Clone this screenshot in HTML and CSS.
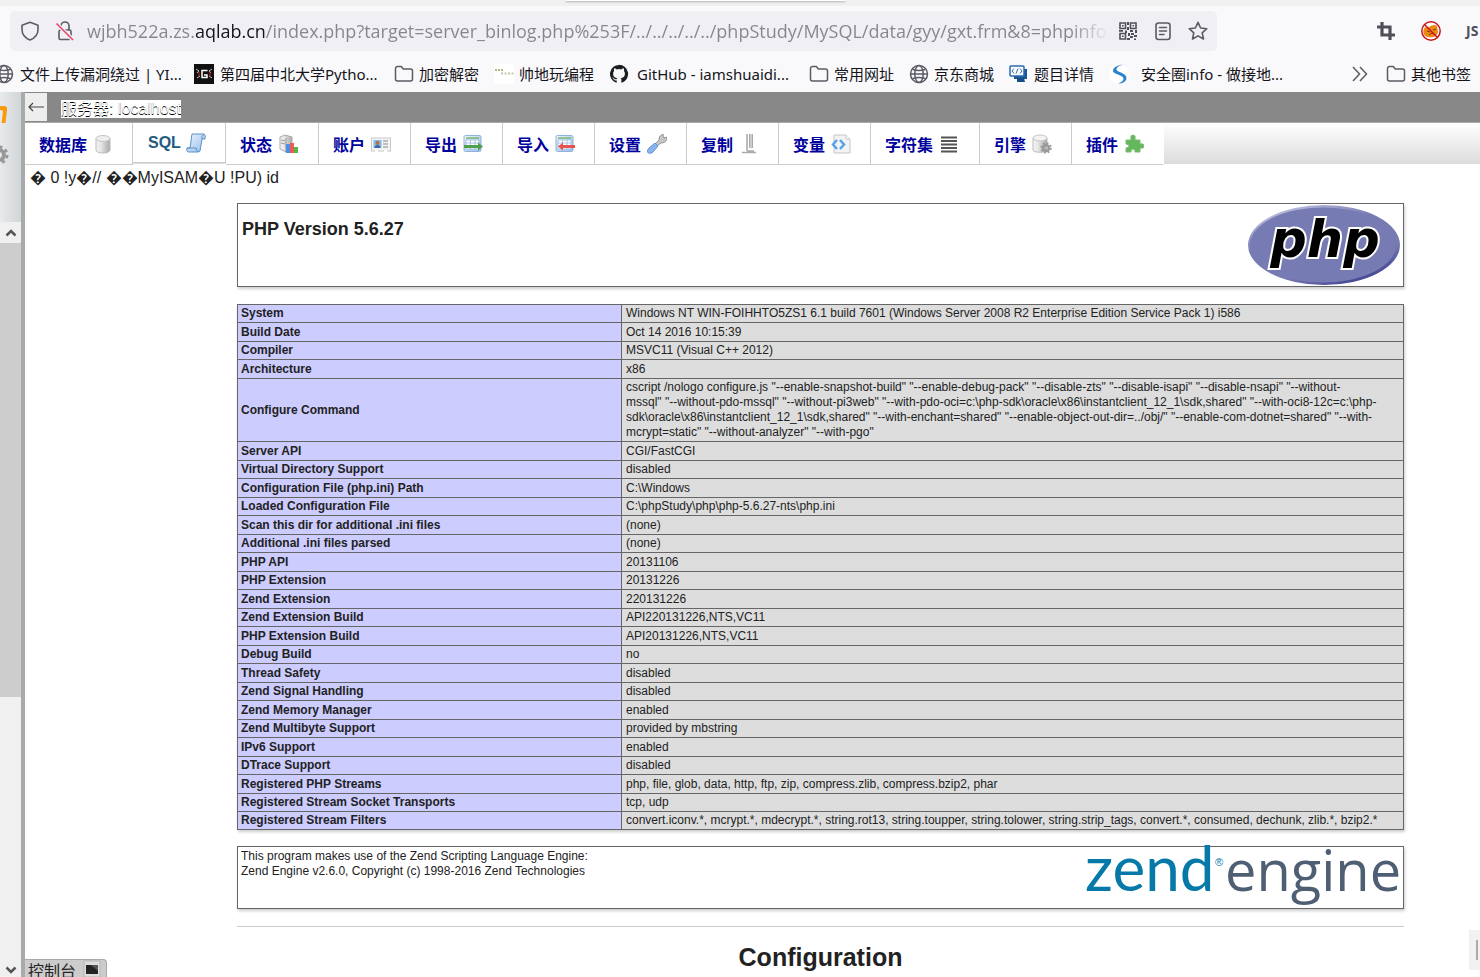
FILE: index.html
```html
<!DOCTYPE html>
<html lang="zh-CN">
<head>
<meta charset="utf-8">
<title>phpinfo()</title>
<link rel="stylesheet" href="styles.css">
</head>
<body>
<svg class="defs" aria-hidden="true">
  <defs>
    <linearGradient id="metal" x1="0" x2="1" y1="0" y2="0"><stop offset="0" stop-color="#f4f4f4"/><stop offset=".35" stop-color="#e6e6e6"/><stop offset="1" stop-color="#a9a9a9"/></linearGradient>
    <linearGradient id="blue" x1="0" x2="1" y1="0" y2="1"><stop offset="0" stop-color="#eef6ff"/><stop offset="1" stop-color="#93bdea"/></linearGradient>
    <symbol id="folder" viewBox="0 0 20 20"><path d="M1.5 15V4.500a2 2 0 0 1 2-2h3.800l2 2.500H16.500a2 2 0 0 1 2 2V15a2 2 0 0 1-2 2h-13a2 2 0 0 1-2-2Z" fill="none" stroke="#5b5b66" stroke-width="1.500"/></symbol>
    <symbol id="globe" viewBox="0 0 20 20"><g fill="none" stroke="#5b5b66" stroke-width="1.500"><circle cx="10" cy="10" r="8.500"/><ellipse cx="10" cy="10" rx="4.200" ry="8.500"/><path d="M1.500 10h17M3.500 5.200c4 1.600 9 1.600 13 0M3.500 14.800c4-1.600 9-1.600 13 0"/></g></symbol>
    <symbol id="gear" viewBox="0 0 20 20"><g fill="none" stroke="#999"><circle cx="10" cy="10" r="5" stroke-width="4"/><circle cx="10" cy="10" r="8" stroke-width="3" stroke-dasharray="3.140 3.140"/></g></symbol>
    <symbol id="sheet" viewBox="0 0 20 20"><rect x="1" y="1.500" width="17" height="16" rx="1.500" fill="url(#blue)" stroke="#8fb3dc"/><path d="M3 4h13" stroke="#78b66c" stroke-width="1.500"/><rect x="3" y="6" width="13" height="9" fill="#fff" stroke="#a8c4e2"/><path d="M3 9h13M3 12h13M7.500 6v9M12 6v9" stroke="#a8c4e2"/></symbol>
  </defs>
</svg>

<div class="strip"><div class="strip-popup"></div></div>
<div class="navbar">
  <div class="urlbar">
    <svg class="ico" viewBox="0 0 20 20"><path d="M10 1.200 18 4.200v4.300c0 4.800-3.300 8.600-8 10.500C5.300 17.100 2 13.300 2 8.500V4.200Z" fill="none" stroke="#5b5b66" stroke-width="1.600" stroke-linejoin="round"/></svg>
    <svg class="ico" viewBox="0 0 20 20"><g fill="none" stroke="#5b5b66" stroke-width="1.600"><rect x="4" y="9" width="12" height="9.500" rx="1.500"/><path d="M6 9V5a4 4 0 0 1 8 0v4"/></g><path d="M1.500 2.500 18 19" stroke="#f0f0f4" stroke-width="4"/><path d="M1.500 2.500 18 19" stroke="#e8416a" stroke-width="1.600"/></svg>
    <input class="url" type="text" aria-label="地址" value="wjbh522a.zs.aqlab.cn/index.php?target=server_binlog.php%253F/../../../../../phpStudy/MySQL/data/gyy/gxt.frm&amp;8=phpinfo()">
    <svg class="ico" viewBox="0 0 20 20"><g fill="none" stroke="#4f4f59" stroke-width="1.600"><path d="M2 2h5.500v5.500H2zM12.500 2H18v5.500h-5.500zM2 12.500h5.500V18H2z"/></g><path d="M4 4h1.600v1.600H4zM14.500 4h1.600v1.600h-1.600zM4 14.500h1.600v1.600H4zM9 1h2v3H9zM9 6h2v3H9zM1 9h4v1.800H1zM7 9.500h2V12H7zM12 9h3v2h-3zM17 9h2v3h-2zM10 12h2v3h-2zM13 12h3v2h-3zM12 15h3v2h-3zM16 14h3v2h-3zM9 17h3v2H9zM16 17.500h2V19h-2z" fill="#4f4f59"/></svg>
    <svg class="ico" viewBox="0 0 20 20"><g fill="none" stroke="#5b5b66" stroke-width="1.600" stroke-linecap="round"><rect x="3" y="2" width="14" height="16.500" rx="2.500"/><path d="M6.500 6.500h7M6.500 10h7M6.500 13.500h4.500"/></g></svg>
    <svg class="ico" viewBox="0 0 20 20"><path d="m10 1.300 2.600 5.700 6.200.7-4.600 4.200 1.300 6.100L10 14.900 4.500 18l1.300-6.100L1.200 7.700 7.400 7Z" fill="none" stroke="#5b5b66" stroke-width="1.600" stroke-linejoin="round"/></svg>
  </div>
  <div class="extensions">
    <svg class="ico" viewBox="0 0 20 20"><path d="M6 1v13h13M1 6h13v13" fill="none" stroke="#4f4f59" stroke-width="3.200"/></svg>
    <svg class="ico" viewBox="0 0 20 20"><path d="M3 8c1-3 3-1 5-2 3-2 6-3 8-1l1 6c-1 5-6 6-10 5-3 0-6-4-4-8Z" fill="#ee8612"/><path d="m6 10 3 1m3-2 3-1M8 14c2-2 4-2 5-1" stroke="#713d10" fill="none"/><circle cx="10" cy="10" r="9.200" fill="none" stroke="#c9171e" stroke-width="1.500"/><path d="m3.500 3.500 13 13" stroke="#c9171e" stroke-width="1.500"/></svg>
    <span class="js">JS</span>
  </div>
</div>

<nav class="bookmarks">
  <a class="bookmark wide" href="#"><svg class="ico"><use href="#globe"/></svg>文件上传漏洞绕过 | YI...</a>
  <a class="bookmark wide" href="#"><svg class="ico" viewBox="0 0 20 20"><path d="M0 0h20v20H0z" fill="#111"/><path d="M13.500 6.500H8v7h5V11h-3" fill="none" stroke="#fff" stroke-width="1.500"/><path d="m2 5 3 2-2 2m0 5 3-2m12-7-3 2 2 2m1 5-3-2" fill="none" stroke="#d5bcae"/><path d="M5 8v4M16 8v4" stroke="#c22"/></svg>第四届中北大学Pytho...</a>
  <a class="bookmark" href="#"><svg class="ico"><use href="#folder"/></svg>加密解密</a>
  <a class="bookmark mid" href="#"><svg class="ico" viewBox="0 0 20 20"><path d="M0 0h20v20H0z" fill="#fff"/><path d="M1 6h9" stroke="#b5b584" stroke-width="2" stroke-dasharray="2 1"/><path d="M7 9.500h13" stroke="#c8c8a8" stroke-width="2" stroke-dasharray="2 1.500"/></svg>帅地玩编程</a>
  <a class="bookmark wide roomy" href="#"><svg class="ico" viewBox="0 0 16 16"><path fill="#1b1f24" d="M8 .700a7.300 7.300 0 0 0-2.300 14.200c.4.100.5-.2.500-.4v-1.400c-2 .4-2.500-.9-2.500-.9-.3-.8-.8-1.100-.8-1.100-.7-.4 0-.4 0-.4.700 0 1.100.8 1.100.8.700 1.100 1.700.8 2.200.6 0-.5.200-.8.400-1-1.600-.2-3.300-.8-3.300-3.600 0-.8.300-1.500.8-2-.1-.2-.4-1 .1-2 0 0 .6-.2 2 .8a7 7 0 0 1 3.600 0c1.400-1 2-.8 2-.8.500 1 .2 1.800.1 2 .5.500.8 1.200.8 2 0 2.800-1.700 3.400-3.300 3.600.3.200.5.700.5 1.400v2c0 .2.100.5.500.4A7.300 7.300 0 0 0 8 .700Z"/></svg>GitHub - iamshuaidi...</a>
  <a class="bookmark" href="#"><svg class="ico"><use href="#folder"/></svg>常用网址</a>
  <a class="bookmark" href="#"><svg class="ico"><use href="#globe"/></svg>京东商城</a>
  <a class="bookmark" href="#"><svg class="ico" viewBox="0 0 20 20"><path d="M5 5h13v10H5z" fill="#1b5798"/><path d="M8 14h7l1 4H8z" fill="#164c88"/><rect x="1" y="2" width="14" height="10" rx="1" fill="#fff" stroke="#2c69ac" stroke-width="1.500"/><path d="m5 4.500-2 2.500 2 2.500m6-5 2 2.500-2 2.500m-2-5-2 5" fill="none" stroke="#2c69ac"/></svg>题目详情</a>
  <a class="bookmark wide roomier" href="#"><svg class="ico" viewBox="0 0 20 20"><circle cx="10" cy="10" r="10" fill="#fff"/><path d="M15 .500C8 1 3.500 4 4 7c.5 3.500 11 4 10.500 8-.2 2-3 3.500-5.500 4.500 5 0 8.500-2 8.500-5.500C17.500 8.500 7.500 8.500 7.500 5.500 7.500 3 11 1 15 .500Z" fill="#2d83cd"/></svg>安全圈info - 做接地...</a>
  <div class="bookmarks-end">
    <button class="chevrons" aria-label="更多书签"><svg class="ico" viewBox="0 0 20 20"><path d="m3 3 6.500 7L3 17m7-14 6.500 7-6.500 7" fill="none" stroke="#5b5b66" stroke-width="1.500"/></svg></button>
    <a class="bookmark" href="#"><svg class="ico"><use href="#folder"/></svg>其他书签</a>
  </div>
</nav>

<div class="frames">
  <aside class="sidebar">
    <div class="sidebar-head">
      <svg class="sail" viewBox="0 0 10 20"><path d="M0 2h4q3.500 0 3 4L5.500 19H1.500L3 7.500Q3 6 0 6Z" fill="#f89c0e"/></svg>
      <svg class="side-gear" viewBox="0 0 10 20"><use href="#gear" x="-11" width="20" height="20"/></svg>
    </div>
    <button class="scroll-btn" aria-label="向上"><svg viewBox="0 0 12 8"><path d="m1.500 6.500 4.500-4.500 4.500 4.500" fill="none" stroke="#555" stroke-width="2.500"/></svg></button>
    <div class="thumb"></div>
    <div class="track"></div>
    <button class="scroll-btn down" aria-label="向下"><svg viewBox="0 0 12 8"><path d="m1.500 1.500 4.500 4.500 4.500-4.500" fill="none" stroke="#555" stroke-width="2.500"/></svg></button>
  </aside>

  <main class="main">
    <div class="server">
      <button class="back" aria-label="返回"><svg viewBox="0 0 18 12"><path d="M17 6H2m4-4L2 6l4 4" fill="none" stroke="#444" stroke-width="1.200"/></svg></button>
      <a class="server-link" href="#">服务器: localhost</a>
    </div>
    <nav class="tabs">
      <a class="tab first" href="#">数据库<svg class="ico" viewBox="0 0 20 20"><path d="M3 4v12c0 4 14 4 14 0V4" fill="url(#metal)" stroke="#bbb"/><ellipse cx="10" cy="4.500" rx="7" ry="3" fill="#eee" stroke="#c5c5c5"/></svg></a>
      <a class="tab active" href="#">SQL<svg class="ico" viewBox="0 0 20 20"><path d="M6 1h12q2 1 1 5h-3l-2 12q-1 1-3 1H2q-2-1-1-4h3Z" fill="url(#blue)" stroke="#5d91ca"/><path d="M16 6q-1-3 2-5M1 15h9q0 3 3 4" fill="none" stroke="#5d91ca"/></svg></a>
      <a class="tab status" href="#">状态<svg class="ico" viewBox="0 0 20 20"><path d="m2 3 5-2 7 2v13l-6 2-6-3Z" fill="url(#metal)" stroke="#aaa"/><path d="M8 4v14m-5-12 4 1m-4 2 4 1" stroke="#999"/><path d="M8 10h4v9H8z" fill="#4a8ee8"/><path d="M12 9h4v10h-4z" fill="#ee5c51"/><path d="M16 13h4v6h-4z" fill="#58b64c"/></svg></a>
      <a class="tab" href="#">账户<svg class="ico" viewBox="0 0 20 20"><rect x=".5" y="4" width="19" height="13" fill="#f4f4f4" stroke="#c9c9c9"/><path d="M2.500 6h8v8h-8z" fill="#86b8ec"/><circle cx="6.500" cy="9" r="2" fill="#b0713f"/><path d="M3.500 14q0-3 3-3t3 3Z" fill="#366caa"/><path d="M12 7h5m-5 3h5m-5 3h5" stroke="#aaa" stroke-width="1.500"/><path d="M4 17h3m6 0h3" stroke="#fff" stroke-width="2"/></svg></a>
      <a class="tab" href="#">导出<svg class="ico" viewBox="0 0 20 20"><use href="#sheet"/><path d="M1 11h14V8.500l5 4-5 4V14H1Z" fill="#4f9f4c"/></svg></a>
      <a class="tab" href="#">导入<svg class="ico" viewBox="0 0 20 20"><use href="#sheet"/><path d="M20 11H8V8.500l-5 4 5 4V14h12Z" fill="#e9534f"/></svg></a>
      <a class="tab" href="#">设置<svg class="ico" viewBox="0 0 20 20"><path d="m8 10 4-4q-1-4 4-6l1 4 3-1q0 6-6 6l-4 3Z" fill="#c5c5c5" stroke="#888" stroke-width=".8"/><path d="m2 14 6-5 3 3-5 6q-2 2-4.500 1T2 14Z" fill="#8cb5ec" stroke="#5f93d4"/></svg></a>
      <a class="tab" href="#">复制<svg class="ico" viewBox="0 0 20 20"><path d="M7 0h2v17H7z" fill="#bbb"/><path d="M10 0h4v14h-4z" fill="#aaa"/><path d="M12 0v15" stroke="#eee"/><path d="M3 18.500h14M8 17h7" stroke="#aaa" stroke-width="1.500"/></svg></a>
      <a class="tab" href="#">变量<svg class="ico" viewBox="0 0 20 20"><path d="M3 1h12l4 4v14H3Z" fill="#f3f3f3" stroke="#c5c5c5"/><path d="M15 1v4h4" fill="#fff" stroke="#c5c5c5"/><path d="m6 6-4 4.500L6 15m3-9 4 4.500L9 15" fill="none" stroke="#55a2e8" stroke-width="2.500"/></svg></a>
      <a class="tab three" href="#">字符集<svg class="ico" viewBox="0 0 20 20"><path d="M2 3.500h16M2 7h16M2 10.500h16M2 14h16M2 17.500h16" stroke="#555" stroke-width="1.800"/></svg></a>
      <a class="tab" href="#">引擎<svg class="ico" viewBox="0 0 20 20"><path d="M1 4v12c0 3 14 3 14 0V4" fill="url(#metal)" stroke="#bbb"/><ellipse cx="8" cy="4" rx="7" ry="3" fill="#f3f3f3" stroke="#c5c5c5"/><use href="#gear" x="8" y="8" width="12" height="12"/></svg></a>
      <a class="tab last" href="#">插件<svg class="ico" viewBox="0 0 20 20"><path d="M2 6h5V5q-1-4 2-4t2 4v1h5v4q4-1 4 2t-4 2v4h-5v-2q-2-2-4 0v2H2v-4q3 0 3-2t-3-2Z" fill="#65b75e" stroke="#78bd70"/></svg></a>
    </nav>
    <p class="raw">� 0 !y�// ��MyISAM�U !PU) id</p>

    <div class="info">
      <header class="box title-box">
        <h1 class="version">PHP Version 5.6.27</h1>
        <svg class="php-logo" viewBox="0 0 152 80" role="img" aria-label="PHP logo">
          <defs><linearGradient id="rim" x1=".2" y1="0" x2=".8" y2="1"><stop offset="0" stop-color="#c3c5e3"/><stop offset=".35" stop-color="#777bb3"/><stop offset=".7" stop-color="#777bb3"/><stop offset="1" stop-color="#38388a"/></linearGradient></defs>
          <ellipse cx="76" cy="40" rx="76" ry="40" fill="url(#rim)"/><ellipse cx="75" cy="40" rx="73" ry="37.500" fill="#777bb3"/>
          <text class="php-text" x="77" y="52" text-anchor="middle">php</text>
        </svg>
      </header>

      <table class="facts">
        <tbody>
        <tr><th scope="row">System</th><td>Windows NT WIN-FOIHHTO5ZS1 6.1 build 7601 (Windows Server 2008 R2 Enterprise Edition Service Pack 1) i586</td></tr>
        <tr><th scope="row">Build Date</th><td>Oct 14 2016 10:15:39</td></tr>
        <tr><th scope="row">Compiler</th><td>MSVC11 (Visual C++ 2012)</td></tr>
        <tr><th scope="row">Architecture</th><td>x86</td></tr>
        <tr><th scope="row">Configure Command</th><td class="command">cscript /nologo configure.js "--enable-snapshot-build" "--enable-debug-pack" "--disable-zts" "--disable-isapi" "--disable-nsapi" "--without-<br>mssql" "--without-pdo-mssql" "--without-pi3web" "--with-pdo-oci=c:\php-sdk\oracle\x86\instantclient_12_1\sdk,shared" "--with-oci8-12c=c:\php-<br>sdk\oracle\x86\instantclient_12_1\sdk,shared" "--with-enchant=shared" "--enable-object-out-dir=../obj/" "--enable-com-dotnet=shared" "--with-<br>mcrypt=static" "--without-analyzer" "--with-pgo"</td></tr>
        <tr><th scope="row">Server API</th><td>CGI/FastCGI</td></tr>
        <tr><th scope="row">Virtual Directory Support</th><td>disabled</td></tr>
        <tr><th scope="row">Configuration File (php.ini) Path</th><td>C:\Windows</td></tr>
        <tr><th scope="row">Loaded Configuration File</th><td>C:\phpStudy\php\php-5.6.27-nts\php.ini</td></tr>
        <tr><th scope="row">Scan this dir for additional .ini files</th><td>(none)</td></tr>
        <tr><th scope="row">Additional .ini files parsed</th><td>(none)</td></tr>
        <tr><th scope="row">PHP API</th><td>20131106</td></tr>
        <tr><th scope="row">PHP Extension</th><td>20131226</td></tr>
        <tr><th scope="row">Zend Extension</th><td>220131226</td></tr>
        <tr><th scope="row">Zend Extension Build</th><td>API220131226,NTS,VC11</td></tr>
        <tr><th scope="row">PHP Extension Build</th><td>API20131226,NTS,VC11</td></tr>
        <tr><th scope="row">Debug Build</th><td>no</td></tr>
        <tr><th scope="row">Thread Safety</th><td>disabled</td></tr>
        <tr><th scope="row">Zend Signal Handling</th><td>disabled</td></tr>
        <tr><th scope="row">Zend Memory Manager</th><td>enabled</td></tr>
        <tr><th scope="row">Zend Multibyte Support</th><td>provided by mbstring</td></tr>
        <tr><th scope="row">IPv6 Support</th><td>enabled</td></tr>
        <tr><th scope="row">DTrace Support</th><td>disabled</td></tr>
        <tr><th scope="row">Registered PHP Streams</th><td>php, file, glob, data, http, ftp, zip, compress.zlib, compress.bzip2, phar</td></tr>
        <tr><th scope="row">Registered Stream Socket Transports</th><td>tcp, udp</td></tr>
        <tr><th scope="row">Registered Stream Filters</th><td>convert.iconv.*, mcrypt.*, mdecrypt.*, string.rot13, string.toupper, string.tolower, string.strip_tags, convert.*, consumed, dechunk, zlib.*, bzip2.*</td></tr>
        </tbody>
      </table>

      <div class="box zend-box">
        <p class="zend-note">This program makes use of the Zend Scripting Language Engine:<br>Zend Engine v2.6.0, Copyright (c) 1998-2016 Zend Technologies</p>
        <svg class="zend-logo" viewBox="0 0 316 60" role="img" aria-label="Zend Engine logo">
          <text class="zend-word" x="1" y="43">zend</text>
          <text class="zend-reg" x="131" y="18">®</text>
          <text class="engine-word" x="141" y="43">engine</text>
        </svg>
      </div>
      <hr class="rule">
      <h2 class="section-title">Configuration</h2>
    </div>

    <button class="console">控制台<svg class="console-ico" viewBox="0 0 18 18"><rect x="1" y="1" width="16" height="16" fill="#ddd" stroke="#b5b5b5"/><path d="M3 5h12v9H3z" fill="#222"/><path d="M8 5h7v6Z" fill="#555"/></svg></button>
    <div class="grip"><span class="grip-bar"></span></div>
  </main>
</div>
</body>
</html>
```

FILE: styles.css
```css
* { box-sizing: border-box; }

body {
  margin: 0;
  height: 100vh;
  display: flex;
  flex-direction: column;
  overflow: hidden;
  background: #fff;
  color: #222;
  font-family: "Liberation Sans", "Noto Sans CJK SC", sans-serif;
}

a { text-decoration: none; color: inherit; }
button { border: 0; padding: 0; margin: 0; background: none; font: inherit; color: inherit; }
svg { display: block; flex: none; }
.defs { position: absolute; width: 0; height: 0; }
.ico { width: 20px; height: 20px; }

/* Browser chrome */
.strip { height: 6px; flex: none; background: #f0f0f0; padding: 0 635px 0 566px; }
.strip-popup { height: 1px; background: #fff; box-shadow: 0 1px 2px #999; }

.navbar {
  flex: none;
  display: flex;
  align-items: center;
  height: 50px;
  padding-left: 10px;
  background: #f9f9fb;
}
.urlbar {
  flex: 1;
  min-width: 0;
  height: 40px;
  display: flex;
  align-items: center;
  gap: 15px;
  padding: 0 9px 0 10px;
  background: #f0f0f4;
  border-radius: 5px;
}
.url {
  flex: 1;
  min-width: 0;
  border: 0;
  outline: 0;
  padding: 0;
  margin-right: -6px;
  margin-left: -3px;
  font: 18px/28px "Open Sans", "Noto Sans", sans-serif;
  color: transparent;
  background: linear-gradient(90deg, #85858a 108px, #15141a 108px, #15141a 179px, #85858a 179px, #85858a calc(100% - 40px), #f0f0f4 100%);
  -webkit-background-clip: text;
  background-clip: text;
}
.extensions {
  flex: none;
  width: 263px;
  display: flex;
  align-items: center;
  justify-content: flex-end;
  gap: 25px;
  overflow: hidden;
}
.js { width: 14px; font: bold 14px/20px "Open Sans", sans-serif; color: #4f4f59; }

.bookmarks {
  flex: none;
  display: flex;
  align-items: center;
  height: 36px;
  margin-left: -6px;
  background: #f9f9fb;
  font: 15px/20px "Noto Sans", "Noto Sans CJK SC", sans-serif;
  color: #15141a;
  box-shadow: 0 1px 0 #ccc;
}
.bookmark { flex: none; display: flex; align-items: center; gap: 5px; width: 100px; white-space: nowrap; }
.bookmark.wide { width: 200px; gap: 6px; }
.bookmark.mid { width: 115px; }
.bookmark.roomy { gap: 8px; }
.bookmark.roomier { gap: 12px; }
.bookmarks-end { flex: 1; display: flex; justify-content: flex-end; gap: 16px; }
.bookmarks-end .bookmark { width: 94px; }

/* Frames */
.frames { flex: 1; min-height: 0; display: flex; }
.sidebar {
  flex: none;
  width: 25px;
  display: flex;
  flex-direction: column;
  border-right: 4px solid #aaa;
  background: #f0f0f0;
}
.sidebar-head {
  height: 130px;
  flex: none;
  padding-top: 12px;
  background: linear-gradient(90deg, #e8eaeb, #d0d5d7);
}
.sail { width: 10px; height: 20px; }
.side-gear { width: 10px; height: 20px; margin-top: 21px; }
.scroll-btn { flex: none; height: 21px; display: flex; justify-content: center; align-items: center; }
.scroll-btn svg { width: 12px; height: 8px; }
.scroll-btn.down { height: 14px; }
.thumb { flex: 63 1 0; background: #cdcdcd; }
.track { flex: 37 1 0; }

.main { flex: 1; min-width: 0; position: relative; overflow: hidden; }
.server {
  display: flex;
  align-items: center;
  height: 31px;
  gap: 14px;
  background: #888;
  border-bottom: 1px solid #aaa;
}
.back { width: 22px; height: 28px; background: #eee; display: flex; align-items: center; justify-content: center; }
.back svg { width: 18px; height: 12px; }
.server-link {
  background: #fff;
  color: #fff;
  font-size: 16px;
  line-height: 18px;
  text-shadow: 0 1px 0 #000;
  margin-top: 4px;
}

.tabs {
  display: flex;
  align-items: flex-start;
  height: 41px;
  background: linear-gradient(#fff, #dcdcdc);
}
.tab {
  flex: none;
  display: flex;
  align-items: center;
  gap: 6px;
  width: 92px;
  height: 42px;
  padding-left: 14px;
  background: #fff;
  border-right: 1px solid #ccc;
  border-bottom: 1px solid #ccc;
  color: #00009c;
  font-weight: bold;
  font-size: 16px;
}
.tab.first { width: 108px; }
.tab.three { width: 109px; }
.tab.status { width: 93px; }
.tab.active { width: 93px; height: 40px; color: #235a81; padding-left: 15px; gap: 5px; }
.tab.last { border-right-color: #fff; }

.raw { margin: 0; padding: 4px 5px 0; font-size: 16px; line-height: 20px; }

/* phpinfo */
.info { padding: 15px 76px 0 212px; font-size: 12px; line-height: 15px; }
.box {
  display: flex;
  justify-content: space-between;
  border: 1px solid #666;
  box-shadow: 1px 2px 3px #ccc;
  padding: 1px 3px;
  margin-bottom: 17px;
}
.title-box { height: 84px; }
.version { margin: 14px 1px; font-size: 18px; line-height: 21px; }
.php-logo { width: 152px; height: 80px; }
.php-text {
  font: italic bold 51px "DejaVu Sans", sans-serif;
  fill: #000;
  stroke: #fff;
  stroke-width: 4px;
  paint-order: stroke;
}

.facts {
  width: 100%;
  table-layout: fixed;
  border-collapse: collapse;
  box-shadow: 1px 2px 3px #ccc;
  margin-bottom: 16px;
}
.facts th, .facts td { border: 1px solid #666; padding: 0 4px; vertical-align: middle; text-align: left; }
.facts th { width: 384px; padding-left: 3px; background: #ccf; }
.facts td { background: #ddd; }
.facts tr { height: 18px; }
.facts tr:nth-child(even) { height: 19px; }
.facts tr:last-child { height: 18px; }
.facts .command { padding: 1px 4px; }

.zend-box { height: 63px; }
.zend-note { margin: 1px 0; }
.zend-logo { width: 316px; height: 60px; overflow: visible; }
.zend-word { font: 62px Lato, sans-serif; fill: #0679a8; }
.zend-reg { font: 11px "Liberation Sans", sans-serif; fill: #0679a8; }
.engine-word { font: 56px "Open Sans", sans-serif; fill: #4f5f73; }
.rule { height: 1px; margin: 0 0 16px; border: 0; background: #ccc; }
.section-title { margin: 0; text-align: center; font-size: 25px; line-height: 28px; }

/* Overlays pinned to the frame edges */
.console {
  position: absolute;
  left: 0;
  bottom: 0;
  width: 82px;
  height: 18px;
  overflow: hidden;
  display: flex;
  gap: 7px;
  padding-left: 3px;
  background: #ccc;
  border: 1px solid #aaa;
  border-width: 1px 1px 0 0;
  border-radius: 0 4px 0 0;
  font-size: 16px;
  line-height: 24px;
}
.console-ico { width: 18px; height: 18px; }
.grip {
  position: absolute;
  right: 0;
  bottom: 7px;
  width: 11px;
  height: 40px;
  padding: 10px 0 0 7px;
  background: #f1f1f1;
}
.grip-bar { display: block; width: 2px; height: 20px; background: #aaa; }
```
